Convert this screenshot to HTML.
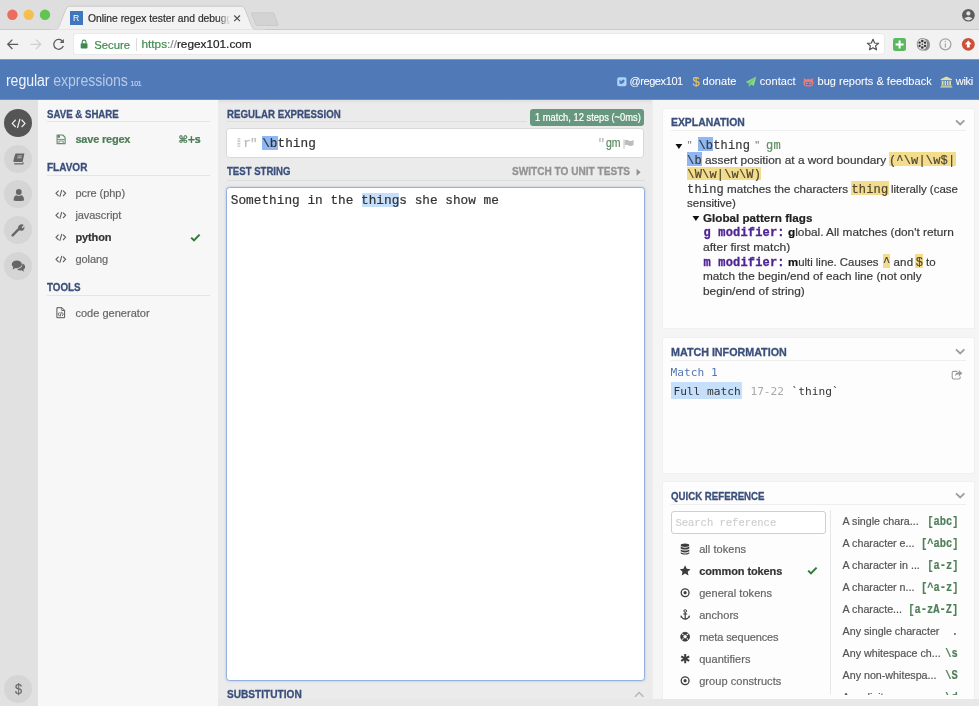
<!DOCTYPE html>
<html lang="en"><head><meta charset="utf-8"><title>Online regex tester and debugger</title>
<style>
html,body{margin:0;padding:0}
body{width:979px;height:706px;position:relative;overflow:hidden;background:#ebebeb;font-family:"Liberation Sans",sans-serif}
.b{position:absolute;box-sizing:border-box;display:block}
.t{position:absolute;white-space:pre;display:block}
.s{font-family:"Liberation Sans",sans-serif;-webkit-text-stroke:0.2px}
.m{font-family:"Liberation Mono",monospace;-webkit-text-stroke:0.2px}
.d{font-family:"DejaVu Sans Mono","Liberation Mono",monospace}
</style></head><body><div id="app" style="position:absolute;left:0;top:0;width:979px;height:706px;will-change:transform">
<div class="b" style="left:0px;top:0px;width:979px;height:29.5px;background:#dedede;"></div>
<div class="b" style="left:0px;top:29px;width:979px;height:1px;background:#c9c9c9;"></div>
<div class="b" style="left:0px;top:30px;width:979px;height:29px;background:#f2f2f2;"></div>
<svg class="b" style="left:50px;top:0px;" width="215" height="31" viewBox="0 0 215 31"><path d="M2.3 30 C7.8 30 8.3 28 9.8 24.5 L15.8 9.5 C16.8 7 17.8 6.3 20.3 6.3 L190.5 6.3 C193 6.3 194 7 195 9.5 L201 24.5 C202.5 28 203 30 208.5 30 Z" fill="#f2f2f2" stroke="#c4c4c4" stroke-width="0.8"/><rect x="0" y="29.7" width="215" height="2" fill="#f2f2f2"/></svg>
<svg class="b" style="left:248px;top:10px;" width="34" height="18" viewBox="0 0 34 18"><path d="M4.2 2.8 L24.6 2.8 Q25.6 2.8 26 3.8 L29.9 14.4 Q30.3 15.5 29.2 15.5 L9.3 15.5 Q8.3 15.5 7.9 14.5 L3.6 3.9 Q3.2 2.8 4.2 2.8 Z" fill="#d3d3d3" stroke="#c6c6c6" stroke-width="0.8"/></svg>
<svg class="b" style="left:5px;top:8px;" width="50" height="14" viewBox="0 0 50 14"><circle cx="7.4" cy="6.7" r="5.2" fill="#ed6b5f"/><circle cx="23.7" cy="6.7" r="5.2" fill="#f5bf4f"/><circle cx="40" cy="6.7" r="5.2" fill="#61c554"/></svg>
<div class="b" style="left:69.6px;top:11.4px;width:13.2px;height:13.2px;background:#3f77bf;"></div>
<span class="t s" style="left:73px;top:12.50px;font-size:8.6px;line-height:11px;color:#fff;-webkit-text-stroke:0;">R</span>
<div class="b" style="left:86px;top:8px;width:146px;height:20px;overflow:hidden">
<span class="t s" style="left:2px;top:4.00px;font-size:10.3px;line-height:13px;color:#2f2f2f;">Online regex tester and debugger: PHP, PCRE, Python, Golang and JavaScript</span>
</div>
<div class="b" style="left:218px;top:9px;width:14px;height:18px;background:linear-gradient(90deg,rgba(242,242,242,0),#f2f2f2 90%);"></div>
<svg class="b" style="left:233px;top:14px;" width="9" height="9" viewBox="0 0 9 9"><path d="M1.2 1.5 L7 7.2 M7 1.5 L1.2 7.2" stroke="#4a4a4a" stroke-width="1.1" fill="none"/></svg>
<svg class="b" style="left:961px;top:7.5px;" width="15" height="15" viewBox="0 0 15 15"><circle cx="7.4" cy="7.3" r="6.3" fill="#5c5c5c"/><circle cx="7.4" cy="5.4" r="2.1" fill="#dedede"/><path d="M3.2 10.6 Q7.4 6.8 11.6 10.6 Q9.8 12.4 7.4 12.4 Q5 12.4 3.2 10.6Z" fill="#dedede"/></svg>
<svg class="b" style="left:5px;top:37px;" width="16" height="15" viewBox="0 0 16 15"><path d="M13.2 7.3 L3 7.3 M7.4 2.6 L2.7 7.3 L7.4 12" stroke="#5a5a5a" stroke-width="1.25" fill="none"/></svg>
<svg class="b" style="left:28px;top:37px;" width="16" height="15" viewBox="0 0 16 15"><path d="M2.4 7.3 L12.4 7.3 M8 2.6 L12.7 7.3 L8 12" stroke="#cfcfcf" stroke-width="1.25" fill="none"/></svg>
<svg class="b" style="left:51px;top:37px;" width="16" height="15" viewBox="0 0 16 15"><path d="M11.6 4.4 A4.9 4.9 0 1 0 12.3 9" stroke="#5a5a5a" stroke-width="1.25" fill="none"/><path d="M12.9 1.9 L12.9 6.1 L8.7 6.1 Z" fill="#5a5a5a"/></svg>
<div class="b" style="left:73.4px;top:33px;width:811.2px;height:22px;background:#fff;border:1px solid #e9e9e9;border-radius:3.5px;"></div>
<svg class="b" style="left:80px;top:39px;" width="9" height="11" viewBox="0 0 9 11"><rect x="0.7" y="4.2" width="6.8" height="5.4" rx="0.8" fill="#3f8b4f"/><path d="M2.2 4.6 V3 A1.9 1.9 0 0 1 6 3 V4.6" stroke="#3f8b4f" stroke-width="1.1" fill="none"/></svg>
<span class="t s" style="left:94.2px;top:37.50px;font-size:11.3px;line-height:15px;color:#3f8b4f;">Secure</span>
<div class="b" style="left:135.6px;top:38px;width:1px;height:12.5px;background:#dcdcdc;"></div>
<span class="t s" style="left:141.5px;top:37.3px;font-size:11.8px;line-height:15px;color:#222"><span style="color:#3f8b4f">https</span><span style="color:#8a8a8a">://</span>regex101.com</span>
<svg class="b" style="left:866px;top:38px;" width="14" height="13" viewBox="0 0 14 13"><path d="M7 1.3 L8.6 5 L12.6 5.3 L9.6 7.9 L10.5 11.8 L7 9.7 L3.5 11.8 L4.4 7.9 L1.4 5.3 L5.4 5 Z" stroke="#505050" stroke-width="1.2" fill="none" stroke-linejoin="round"/></svg>
<div class="b" style="left:893.3px;top:37.6px;width:13.2px;height:13.2px;background:#5cb860;border-radius:2.2px;"></div>
<svg class="b" style="left:893.3px;top:37.6px;" width="13.2" height="13.2" viewBox="0 0 13.2 13.2"><path d="M6.6 2.6 V10.6 M2.6 6.6 H10.6" stroke="#fff" stroke-width="2"/></svg>
<svg class="b" style="left:915.5px;top:37px;" width="15" height="14.5" viewBox="0 0 15 14.5"><ellipse cx="9.4" cy="7.8" rx="4.6" ry="6" fill="#8f8f8f"/><ellipse cx="6.3" cy="7.2" rx="5.5" ry="6.3" fill="#7c7c7c"/><ellipse cx="6.3" cy="7.2" rx="4.8" ry="5.6" fill="#dcdcdc"/><circle cx="6.3" cy="3.9" r="1.25" fill="#333"/><circle cx="6.3" cy="10.5" r="1.25" fill="#333"/><circle cx="3.6" cy="5.7" r="1.15" fill="#333"/><circle cx="9" cy="5.7" r="1.15" fill="#333"/><circle cx="3.6" cy="8.9" r="1.15" fill="#333"/><circle cx="9" cy="8.9" r="1.15" fill="#333"/><circle cx="6.3" cy="7.2" r="0.8" fill="#333"/></svg>
<svg class="b" style="left:938px;top:37px;" width="15" height="15" viewBox="0 0 15 15"><circle cx="7.4" cy="7.3" r="5.5" stroke="#a2a2a2" stroke-width="1.25" fill="none"/><path d="M7.4 6.3 V10.4" stroke="#aaa" stroke-width="1.2"/><circle cx="7.4" cy="4.4" r="0.75" fill="#aaa"/></svg>
<svg class="b" style="left:961px;top:37px;" width="15" height="15" viewBox="0 0 15 15"><circle cx="7.3" cy="7.3" r="6.4" fill="#c9513b"/><path d="M7.3 3.4 L10.7 7.2 L8.7 7.2 L8.7 10.6 L5.9 10.6 L5.9 7.2 L3.9 7.2 Z" fill="#fff"/></svg>
<div class="b" style="left:0px;top:59px;width:979px;height:41px;background:#5079b8;"></div>
<div class="b" style="left:0px;top:59px;width:979px;height:1px;background:#8099c9;"></div>
<div class="b" style="left:0px;top:99px;width:979px;height:1px;background:#6f8fc3;"></div>
<span class="t s" style="left:6.2px;top:68.5px;font-size:17.3px;line-height:22px;color:#eef3fa;-webkit-text-stroke:0;transform:scaleX(0.8175);transform-origin:0 0;letter-spacing:-0.1px">regular <span style="color:#b7c9e6">expressions</span></span>
<span class="t s" style="left:130.6px;top:79.00px;font-size:6.8px;line-height:9px;color:#c3d3ec;letter-spacing:-0.2px;">101</span>
<svg class="b" style="left:616.5px;top:76.7px;" width="10" height="10" viewBox="0 0 10 10"><rect x="0.2" y="0.3" width="9.3" height="9" rx="1.8" fill="#a9d4f7"/><path d="M2.1 6.9 Q4.6 7.4 6.3 5.9 Q7.5 4.8 7.4 3.6 L8 2.9 L7.2 3 Q6.4 2.2 5.5 2.8 Q4.8 3.3 4.9 4.1 Q3.4 4 2.4 2.9 Q1.9 4 2.8 4.8 L2.2 4.7 Q2.4 5.7 3.3 6 Q2.8 6.6 2.1 6.9Z" fill="#4f78b7"/></svg>
<span class="t s" style="left:629.4px;top:74.00px;font-size:11px;line-height:14px;color:#fff;letter-spacing:-0.4px;-webkit-text-stroke:0.05px;">@regex101</span>
<span class="t s" style="left:692.6px;top:73.00px;font-size:13px;line-height:17px;color:#f3c65e;-webkit-text-stroke:0.1px;">$</span>
<span class="t s" style="left:702.5px;top:74.00px;font-size:11px;line-height:14px;color:#fff;letter-spacing:0.05px;-webkit-text-stroke:0.05px;">donate</span>
<svg class="b" style="left:744.6px;top:75.6px;" width="12" height="12" viewBox="0 0 12 12"><path d="M11.3 0.5 L0.6 5.9 L3.6 7.2 L4 10.9 L6 8.4 L8.8 9.9 Z" fill="#84d982"/><path d="M11.3 0.5 L3.6 7.2 L4 10.9 L4.9 7.7 Z" fill="#63bd67"/></svg>
<span class="t s" style="left:759.8px;top:74.00px;font-size:11px;line-height:14px;color:#fff;letter-spacing:0.05px;-webkit-text-stroke:0.05px;">contact</span>
<svg class="b" style="left:803px;top:76.5px;" width="11" height="11" viewBox="0 0 11 11"><path d="M0.9 1 L3 2.4 Q5.4 1.8 7.8 2.4 L9.9 1 L9.9 3.8 Q10.8 5.4 10.3 7.2 Q9.6 9.6 5.4 9.6 Q1.2 9.6 0.5 7.2 Q0 5.4 0.9 3.8 Z" fill="#f07a7a"/><rect x="1.9" y="5" width="7" height="3.2" rx="1.5" fill="#6a6f9f"/><circle cx="3.8" cy="6.6" r="0.75" fill="#f4a9a4"/><circle cx="7" cy="6.6" r="0.75" fill="#f4a9a4"/></svg>
<span class="t s" style="left:817.5px;top:74.00px;font-size:11px;line-height:14px;color:#fff;letter-spacing:0.02px;-webkit-text-stroke:0.05px;">bug reports &amp; feedback</span>
<svg class="b" style="left:939.5px;top:75.5px;" width="13" height="12" viewBox="0 0 13 12"><path d="M6.3 0.5 L12 3.3 L12 4.2 L0.6 4.2 L0.6 3.3 Z M1.7 4.9 H3.5 V9 H1.7Z M4.5 4.9 H6 V9 H4.5Z M6.9 4.9 H8.4 V9 H6.9Z M9.3 4.9 H11 V9 H9.3Z M1 9.5 H11.7 V10.4 H1Z M0.3 10.7 H12.4 V11.6 H0.3Z" fill="#dfe0a6"/></svg>
<span class="t s" style="left:955.8px;top:74.00px;font-size:11px;line-height:14px;color:#fff;letter-spacing:-0.3px;-webkit-text-stroke:0.05px;">wiki</span>
<div class="b" style="left:0px;top:100px;width:38px;height:606px;background:#e1e1e1;"></div>
<div class="b" style="left:4.2px;top:109.1px;width:28px;height:28px;background:#555;border-radius:50%;"></div>
<div class="b" style="left:4.2px;top:144.7px;width:28px;height:28px;background:#d5d5d5;border-radius:50%;"></div>
<div class="b" style="left:4.2px;top:180.3px;width:28px;height:28px;background:#d5d5d5;border-radius:50%;"></div>
<div class="b" style="left:4.2px;top:215.8px;width:28px;height:28px;background:#d5d5d5;border-radius:50%;"></div>
<div class="b" style="left:4.2px;top:251.5px;width:28px;height:28px;background:#d5d5d5;border-radius:50%;"></div>
<div class="b" style="left:4.2px;top:675.2px;width:28px;height:28px;background:#d5d5d5;border-radius:50%;"></div>
<svg class="b" style="left:10.6px;top:117.6px;" width="16" height="11" viewBox="0 0 16 11"><path d="M4.7 1.8 L1.3 5.4 L4.7 9 M10.6 1.8 L14 5.4 L10.6 9 M9 0.9 L6.4 10" stroke="#ececec" stroke-width="1.25" fill="none"/></svg>
<svg class="b" style="left:11.5px;top:152px;" width="14" height="14" viewBox="0 0 14 14"><path d="M4.2 1.5 L12.4 1.5 L10.6 10 L2.4 10 Q0.9 10 1.4 8.4 L3 2.8 Q3.4 1.5 4.2 1.5 Z" fill="#666"/><path d="M2.2 11.8 L10.8 11.8 L11.3 10.4" stroke="#666" stroke-width="1.2" fill="none"/><path d="M5.6 4 H10 M5.2 5.8 H9.6" stroke="#d5d5d5" stroke-width="0.8"/></svg>
<svg class="b" style="left:11.5px;top:187.5px;" width="14" height="14" viewBox="0 0 14 14"><circle cx="6.8" cy="4" r="2.9" fill="#666"/><path d="M1.6 12.4 Q1.6 7.6 4.4 7.3 Q6.8 8.9 9.2 7.3 Q12 7.6 12 12.4 Q6.8 13.6 1.6 12.4Z" fill="#666"/></svg>
<svg class="b" style="left:11.3px;top:222.6px;" width="14" height="14" viewBox="0 0 14 14"><path d="M1.6 12.4 L7.2 6.6" stroke="#666" stroke-width="2.3" stroke-linecap="round"/><path d="M8.2 2.2 Q10.6 0.4 12.8 2 L10.6 4.2 L11.6 5.4 L13.4 3.2 Q14 6 11.8 7.4 Q9.8 8.4 7.8 7 Q6 5 8.2 2.2Z" fill="#666"/></svg>
<svg class="b" style="left:11px;top:258.8px;" width="15" height="14" viewBox="0 0 15 14"><ellipse cx="5.8" cy="5.3" rx="5" ry="3.9" fill="#666"/><path d="M2.4 7.6 L1.6 10.6 L5.2 8.8Z" fill="#666"/><path d="M11.4 4.4 Q14.4 5.6 14.1 8.2 Q13.8 9.9 12.4 10.6 L13.2 12.8 L10.6 11.3 Q7.6 11.8 6 9.9 Q11.4 9.6 11.4 4.4Z" fill="#666"/></svg>
<span class="t s" style="left:14.6px;top:678.50px;font-size:15px;line-height:20px;color:#6a6a6a;-webkit-text-stroke:0.25px #6a6a6a;transform:scaleX(0.8511);transform-origin:0 50%;">$</span>
<div class="b" style="left:38px;top:100px;width:180.2px;height:606px;background:#f7f7f7;"></div>
<span class="t s" style="left:47.1px;top:107.00px;font-size:11.1px;line-height:14px;color:#3a4f7b;font-weight:bold;-webkit-text-stroke:0.3px #3a4f7b;transform:scaleX(0.8709);transform-origin:0 50%;">SAVE &amp; SHARE</span>
<div class="b" style="left:46.5px;top:121px;width:163px;height:1px;background:#e4e4e4;"></div>
<svg class="b" style="left:55.6px;top:133.8px;" width="11" height="11" viewBox="0 0 11 11"><g opacity="0.9"><path d="M1.1 1 H6.8 L9.1 3.3 V9.7 H1.1 Z" stroke="#4d7d56" stroke-width="1.1" fill="none" stroke-linejoin="round"/><rect x="1.6" y="1.2" width="2.4" height="2.5" fill="#4d7d56"/><path d="M1.4 5.4 H8.8" stroke="#4d7d56" stroke-width="0.9"/><rect x="3" y="7" width="4.2" height="2.4" fill="none" stroke="#4d7d56" stroke-width="0.8"/></g></svg>
<span class="t s" style="left:75.4px;top:132.00px;font-size:11px;line-height:14px;color:#4d7d56;font-weight:bold;letter-spacing:-0.2px;">save regex</span>
<span class="t s" style="left:178.6px;top:133.00px;font-size:10px;line-height:13px;color:#4d7d56;font-weight:bold;font-family:'DejaVu Sans','Liberation Sans',sans-serif;letter-spacing:-0.7px;">⌘+s</span>
<span class="t s" style="left:47.1px;top:160.00px;font-size:11.1px;line-height:14px;color:#3a4f7b;font-weight:bold;-webkit-text-stroke:0.3px #3a4f7b;transform:scaleX(0.9016);transform-origin:0 50%;">FLAVOR</span>
<div class="b" style="left:46.5px;top:175px;width:163px;height:1px;background:#e4e4e4;"></div>
<svg class="b" style="left:55.2px;top:188.9px;" width="12" height="9" viewBox="0 0 12 9"><path d="M3.6 1.6 L1 4.3 L3.6 7 M8 1.6 L10.6 4.3 L8 7 M6.8 0.8 L4.8 7.8" stroke="#606060" stroke-width="1.1" fill="none"/></svg>
<span class="t s" style="left:75.4px;top:186.00px;font-size:11px;line-height:14px;color:#666;letter-spacing:-0.05px;">pcre (php)</span>
<svg class="b" style="left:55.2px;top:210.9px;" width="12" height="9" viewBox="0 0 12 9"><path d="M3.6 1.6 L1 4.3 L3.6 7 M8 1.6 L10.6 4.3 L8 7 M6.8 0.8 L4.8 7.8" stroke="#606060" stroke-width="1.1" fill="none"/></svg>
<span class="t s" style="left:75.4px;top:208.00px;font-size:11px;line-height:14px;color:#666;letter-spacing:-0.05px;">javascript</span>
<svg class="b" style="left:55.2px;top:232.9px;" width="12" height="9" viewBox="0 0 12 9"><path d="M3.6 1.6 L1 4.3 L3.6 7 M8 1.6 L10.6 4.3 L8 7 M6.8 0.8 L4.8 7.8" stroke="#606060" stroke-width="1.1" fill="none"/></svg>
<span class="t s" style="left:75.4px;top:230.00px;font-size:11px;line-height:14px;color:#333;font-weight:bold;letter-spacing:-0.1px;">python</span>
<svg class="b" style="left:189.5px;top:232.8px;" width="11" height="9" viewBox="0 0 11 9"><path d="M1.2 4.6 L4 7.4 L9.6 1.6" stroke="#2f7a36" stroke-width="2" fill="none"/></svg>
<svg class="b" style="left:55.2px;top:254.9px;" width="12" height="9" viewBox="0 0 12 9"><path d="M3.6 1.6 L1 4.3 L3.6 7 M8 1.6 L10.6 4.3 L8 7 M6.8 0.8 L4.8 7.8" stroke="#606060" stroke-width="1.1" fill="none"/></svg>
<span class="t s" style="left:75.4px;top:252.00px;font-size:11px;line-height:14px;color:#666;letter-spacing:-0.05px;">golang</span>
<span class="t s" style="left:47.1px;top:280.00px;font-size:11.1px;line-height:14px;color:#3a4f7b;font-weight:bold;-webkit-text-stroke:0.3px #3a4f7b;transform:scaleX(0.8835);transform-origin:0 50%;">TOOLS</span>
<div class="b" style="left:46.5px;top:294.6px;width:163px;height:1px;background:#e4e4e4;"></div>
<svg class="b" style="left:56px;top:306.5px;" width="10" height="12" viewBox="0 0 10 12"><path d="M0.9 0.7 H6 L8.6 3.3 V10.7 H0.9 Z" stroke="#555" stroke-width="1" fill="none"/><path d="M5.8 0.8 V3.5 H8.5" stroke="#555" stroke-width="0.9" fill="none"/><path d="M3.4 5.4 L2.2 7.2 L3.4 9 M6.1 5.4 L7.3 7.2 L6.1 9 M5.3 4.9 L4.2 9.5" stroke="#555" stroke-width="0.9" fill="none"/></svg>
<span class="t s" style="left:75.4px;top:306.00px;font-size:11px;line-height:14px;color:#666;letter-spacing:0.02px;">code generator</span>
<div class="b" style="left:218.2px;top:100px;width:434.4px;height:599px;background:#ebebeb;background:linear-gradient(#dedede,#ebebeb 4px,#ebebeb);"></div>
<div class="b" style="left:218.2px;top:699px;width:760.8px;height:7px;background:#e8e8e8;"></div>
<span class="t s" style="left:227px;top:107.00px;font-size:11.1px;line-height:14px;color:#3a4f7b;font-weight:bold;-webkit-text-stroke:0.3px #3a4f7b;transform:scaleX(0.8744);transform-origin:0 50%;">REGULAR EXPRESSION</span>
<div class="b" style="left:226.5px;top:121px;width:300px;height:1px;background:#dedede;"></div>
<div class="b" style="left:530.2px;top:108.6px;width:114.2px;height:17.2px;background:#68977f;border-radius:3px;"></div>
<span class="t s" style="left:535px;top:111.00px;font-size:10px;line-height:13px;color:#fff;transform:scaleX(0.9354);transform-origin:0 50%;">1 match, 12 steps (~0ms)</span>
<div class="b" style="left:226px;top:128px;width:418.4px;height:30px;background:#fff;border:1px solid #d8d8d8;border-radius:3.5px;"></div>
<svg class="b" style="left:236.5px;top:138px;" width="4" height="10" viewBox="0 0 4 10"><path d="M0.5 0.9 H3.3 M0.5 3.3 H3.3 M0.5 5.7 H3.3 M0.5 8.1 H3.3" stroke="#c4c4c4" stroke-width="1.4"/></svg>
<span class="t m" style="left:243.2px;top:135.00px;font-size:12.77px;line-height:17px;color:#b9b9b9;letter-spacing:-0.8px;">r&quot;</span>
<div class="b" style="left:262.2px;top:136.2px;width:15.5px;height:14.2px;background:#8fb7f3;"></div>
<span class="t m" style="left:262.2px;top:135.00px;font-size:12.77px;line-height:17px;color:#333;">\bthing</span>
<span class="t m" style="left:597.5px;top:135.00px;font-size:12.77px;line-height:17px;color:#b9b9b9;">&quot;</span>
<span class="t s" style="left:605.8px;top:135.00px;font-size:12px;line-height:16px;color:#5a8a5e;transform:scaleX(0.8758);transform-origin:0 50%;">gm</span>
<svg class="b" style="left:623px;top:139px;" width="12" height="10" viewBox="0 0 12 10"><path d="M1 0.4 V9.8" stroke="#c2c2c2" stroke-width="1"/><path d="M1.8 1.4 Q3.6 0.2 5.6 1.4 Q7.8 2.6 10.6 1 V6 Q7.8 7.6 5.6 6.4 Q3.6 5.2 1.8 6.4Z" fill="#bdbdbd"/></svg>
<span class="t s" style="left:227px;top:164.00px;font-size:11.1px;line-height:14px;color:#3a4f7b;font-weight:bold;-webkit-text-stroke:0.3px #3a4f7b;transform:scaleX(0.8639);transform-origin:0 50%;">TEST STRING</span>
<div class="b" style="left:226.5px;top:180px;width:418px;height:1px;background:#dcdcdc;"></div>
<span class="t s" style="left:512px;top:164.00px;font-size:10.9px;line-height:14px;color:#939393;font-weight:bold;-webkit-text-stroke:0.3px #939393;transform:scaleX(0.9265);transform-origin:0 50%;">SWITCH TO UNIT TESTS</span>
<svg class="b" style="left:635.5px;top:167.5px;" width="6" height="9" viewBox="0 0 6 9"><path d="M0.6 0.8 L4.6 4.3 L0.6 7.8Z" fill="#8f8f8f"/></svg>
<div class="b" style="left:226px;top:186.6px;width:418.5px;height:494px;background:#fff;border:1px solid #94afdb;border-radius:3.5px;box-shadow:0 0 2.5px rgba(100,140,205,.45);"></div>
<div class="b" style="left:361.6px;top:192.6px;width:37.6px;height:14.8px;background:#c6dffb;"></div>
<span class="t m" style="left:230.8px;top:192.00px;font-size:12.77px;line-height:17px;color:#333;">Something in the things she show me</span>
<span class="t s" style="left:227px;top:687.00px;font-size:11.1px;line-height:14px;color:#3a4f7b;font-weight:bold;-webkit-text-stroke:0.3px #3a4f7b;transform:scaleX(0.9120);transform-origin:0 50%;">SUBSTITUTION</span>
<svg class="b" style="left:634px;top:690.5px;" width="10.5" height="7" viewBox="0 0 10.5 7"><path d="M1 5.8 L5.2 1.6 L9.4 5.8" stroke="#b5b5b5" stroke-width="1.4" fill="none"/></svg>
<div class="b" style="left:652.6px;top:100px;width:326.4px;height:599px;background:#f5f5f5;"></div>
<div class="b" style="left:652px;top:100px;width:1px;height:599px;background:#efefef;"></div>
<div class="b" style="left:662px;top:108px;width:313px;height:221px;background:#fdfdfd;border:1px solid #f0f0f0;border-radius:2px;"></div>
<span class="t s" style="left:670.6px;top:115.00px;font-size:11.1px;line-height:14px;color:#3a4f7b;font-weight:bold;-webkit-text-stroke:0.3px #3a4f7b;transform:scaleX(0.9374);transform-origin:0 50%;">EXPLANATION</span>
<div class="b" style="left:670.8px;top:130.2px;width:295.5px;height:1px;background:#eeeeee;"></div>
<svg class="b" style="left:954.9px;top:119px;" width="10.5" height="7" viewBox="0 0 10.5 7"><path d="M1 1.3 L5.2 5.5 L9.4 1.3" stroke="#9c9c9c" stroke-width="1.8" fill="none"/></svg>
<svg class="b" style="left:675px;top:142.6px;" width="8" height="7" viewBox="0 0 8 7"><path d="M0.5 1 H7.3 L3.9 6Z" fill="#111"/></svg>
<span class="t s" style="left:687.6px;top:137.50px;font-size:11.5px;line-height:15px;color:#888;">&quot;</span>
<div class="b" style="left:698.3px;top:137.2px;width:14.7px;height:13.4px;background:#8fb7f3;"></div>
<span class="t m" style="left:698.39px;top:138.00px;font-size:12px;line-height:16px;color:#3a3a3a;letter-spacing:0.18px;">\bthing</span>
<span class="t s" style="left:755.2px;top:137.50px;font-size:11.5px;line-height:15px;color:#888;">&quot;</span>
<span class="t m" style="left:766.09px;top:138.00px;font-size:12px;line-height:16px;color:#5f8f63;letter-spacing:0.18px;">gm</span>
<div class="b" style="left:687px;top:152.2px;width:14.7px;height:13.4px;background:#8fb7f3;"></div>
<span class="t m" style="left:687.09px;top:153.00px;font-size:12px;line-height:16px;color:#3a3a3a;letter-spacing:0.18px;">\b</span>
<span class="t s" style="left:704.6px;top:152.50px;font-size:11.5px;line-height:15px;color:#3a3a3a;transform:scaleX(1.0307);transform-origin:0 50%;">assert position at a word boundary</span>
<div class="b" style="left:888.6px;top:152.4px;width:67px;height:13.4px;background:#f4dc8d;"></div>
<span class="t m" style="left:888.89px;top:153.00px;font-size:12px;line-height:16px;color:#4d4632;letter-spacing:0.18px;">(^\w|\w$|</span>
<div class="b" style="left:687px;top:166.9px;width:74.2px;height:13.4px;background:#f4dc8d;"></div>
<span class="t m" style="left:687.2900000000001px;top:167.00px;font-size:12px;line-height:16px;color:#4d4632;letter-spacing:0.18px;">\W\w|\w\W)</span>
<span class="t m" style="left:687.09px;top:182.00px;font-size:12px;line-height:16px;color:#3a3a3a;letter-spacing:0.18px;">thing</span>
<span class="t s" style="left:727.2px;top:181.50px;font-size:11.5px;line-height:15px;color:#3a3a3a;transform:scaleX(1.0123);transform-origin:0 50%;">matches the characters</span>
<div class="b" style="left:851px;top:181.4px;width:37.7px;height:13.4px;background:#f4dc8d;"></div>
<span class="t m" style="left:851.39px;top:182.00px;font-size:12px;line-height:16px;color:#4d4632;letter-spacing:0.18px;">thing</span>
<span class="t s" style="left:891.4px;top:181.50px;font-size:11.5px;line-height:15px;color:#3a3a3a;transform:scaleX(0.9970);transform-origin:0 50%;">literally (case</span>
<span class="t s" style="left:686.8px;top:195.50px;font-size:11.5px;line-height:15px;color:#3a3a3a;transform:scaleX(1.0047);transform-origin:0 50%;">sensitive)</span>
<svg class="b" style="left:691.5px;top:215.2px;" width="8" height="7" viewBox="0 0 8 7"><path d="M0.5 1 H7.3 L3.9 6Z" fill="#111"/></svg>
<span class="t s" style="left:703.4px;top:210.50px;font-size:11.5px;line-height:15px;color:#222;font-weight:bold;transform:scaleX(1.0131);transform-origin:0 50%;">Global pattern flags</span>
<span class="t m" style="left:703.49px;top:225.00px;font-size:12px;line-height:16px;color:#4f2494;font-weight:bold;letter-spacing:0.18px;-webkit-text-stroke:0.3px #4f2494;">g modifier:</span>
<span class="t s" style="left:788px;top:224.50px;font-size:11.5px;line-height:15px;color:#3a3a3a;transform:scaleX(1.0278);transform-origin:0 50%;"><b style="color:#111">g</b>lobal. All matches (don&#39;t return</span>
<span class="t s" style="left:703.4px;top:239.50px;font-size:11.5px;line-height:15px;color:#3a3a3a;transform:scaleX(1.0497);transform-origin:0 50%;">after first match)</span>
<span class="t m" style="left:703.49px;top:255.00px;font-size:12px;line-height:16px;color:#4f2494;font-weight:bold;letter-spacing:0.18px;-webkit-text-stroke:0.3px #4f2494;">m modifier:</span>
<span class="t s" style="left:788px;top:254.50px;font-size:11.5px;line-height:15px;color:#3a3a3a;transform:scaleX(0.9894);transform-origin:0 50%;"><b style="color:#111">m</b>ulti line. Causes</span>
<div class="b" style="left:882.8px;top:254.2px;width:7.6px;height:13.4px;background:#f4dc8d;"></div>
<span class="t m" style="left:883.09px;top:255.00px;font-size:12px;line-height:16px;color:#4d4632;letter-spacing:0.18px;">^</span>
<span class="t s" style="left:893.6px;top:254.50px;font-size:11.5px;line-height:15px;color:#3a3a3a;letter-spacing:0.12px;">and</span>
<div class="b" style="left:915.4px;top:254.2px;width:7.6px;height:13.4px;background:#f4dc8d;"></div>
<span class="t m" style="left:915.69px;top:255.00px;font-size:12px;line-height:16px;color:#4d4632;letter-spacing:0.18px;">$</span>
<span class="t s" style="left:926px;top:254.50px;font-size:11.5px;line-height:15px;color:#3a3a3a;letter-spacing:0.12px;">to</span>
<span class="t s" style="left:703.4px;top:268.50px;font-size:11.5px;line-height:15px;color:#3a3a3a;transform:scaleX(1.0237);transform-origin:0 50%;">match the begin/end of each line (not only</span>
<span class="t s" style="left:703.4px;top:283.50px;font-size:11.5px;line-height:15px;color:#3a3a3a;transform:scaleX(1.0340);transform-origin:0 50%;">begin/end of string)</span>
<div class="b" style="left:662px;top:337.4px;width:313px;height:136.4px;background:#fdfdfd;border:1px solid #f0f0f0;border-radius:2px;"></div>
<span class="t s" style="left:670.6px;top:345.00px;font-size:11.1px;line-height:14px;color:#3a4f7b;font-weight:bold;-webkit-text-stroke:0.3px #3a4f7b;transform:scaleX(0.9664);transform-origin:0 50%;">MATCH INFORMATION</span>
<div class="b" style="left:670.8px;top:360px;width:295.5px;height:1px;background:#eeeeee;"></div>
<svg class="b" style="left:954.9px;top:348px;" width="10.5" height="7" viewBox="0 0 10.5 7"><path d="M1 1.3 L5.2 5.5 L9.4 1.3" stroke="#9c9c9c" stroke-width="1.8" fill="none"/></svg>
<span class="t d" style="left:670.6px;top:365.00px;font-size:11.2px;line-height:15px;color:#5577b4;">Match 1</span>
<div class="b" style="left:670.7px;top:381.8px;width:71.5px;height:17px;background:#c6dffb;"></div>
<span class="t d" style="left:673.4px;top:384.00px;font-size:11.2px;line-height:15px;color:#333;">Full match</span>
<span class="t d" style="left:750.4px;top:384.00px;font-size:11.2px;line-height:15px;color:#a9a9a9;">17-22</span>
<span class="t d" style="left:791.5px;top:384.00px;font-size:11.2px;line-height:15px;color:#333;">`thing`</span>
<svg class="b" style="left:951px;top:369.2px;" width="12" height="11" viewBox="0 0 12 11"><path d="M6.4 2.4 H2.6 Q1.2 2.4 1.2 3.8 V8.6 Q1.2 10 2.6 10 H7.8 Q9.2 10 9.2 8.6 V7.4" stroke="#9a9a9a" stroke-width="1.1" fill="none"/><path d="M4 7 Q4 3.4 7.8 3.2 V1 L11.4 4.2 L7.8 7.4 V5.2 Q5.2 5.2 4 7Z" fill="#9a9a9a"/></svg>
<div class="b" style="left:662px;top:481.4px;width:313px;height:217.6px;background:#fdfdfd;border:1px solid #f0f0f0;border-radius:2px;border-bottom:none;border-radius:2px 2px 0 0;"></div>
<span class="t s" style="left:670.6px;top:489.00px;font-size:11.1px;line-height:14px;color:#3a4f7b;font-weight:bold;-webkit-text-stroke:0.3px #3a4f7b;transform:scaleX(0.8722);transform-origin:0 50%;">QUICK REFERENCE</span>
<div class="b" style="left:670.8px;top:504px;width:295.5px;height:1px;background:#eeeeee;"></div>
<svg class="b" style="left:954.9px;top:491.9px;" width="10.5" height="7" viewBox="0 0 10.5 7"><path d="M1 1.3 L5.2 5.5 L9.4 1.3" stroke="#9c9c9c" stroke-width="1.8" fill="none"/></svg>
<div class="b" style="left:670.7px;top:510.6px;width:155px;height:23px;background:#fff;border:1px solid #cfcfcf;border-radius:3px;"></div>
<span class="t m" style="left:675.4px;top:516.00px;font-size:10.5px;line-height:14px;color:#cfcfcf;">Search reference</span>
<div class="b" style="left:830px;top:510px;width:1px;height:184px;background:#e6e6e6;"></div>
<svg class="b" style="left:679.8px;top:543.1px;" width="11" height="13" viewBox="0 0 11 13"><ellipse cx="5" cy="2.3" rx="4.3" ry="1.7" fill="#3d3d3d"/><path d="M0.7 3.6 Q5 6 9.3 3.6 V5.4 Q5 7.8 0.7 5.4Z M0.7 6.4 Q5 8.8 9.3 6.4 V8.2 Q5 10.6 0.7 8.2Z M0.7 9.2 Q5 11.6 9.3 9.2 V10.4 Q5 12.8 0.7 10.4Z" fill="#3d3d3d"/></svg>
<span class="t s" style="left:699.2px;top:542.00px;font-size:11px;line-height:14px;color:#666;letter-spacing:0.05px;">all tokens</span>
<svg class="b" style="left:679.8px;top:565.1999999999999px;" width="11" height="13" viewBox="0 0 11 13"><path d="M5.1 0.3 L6.75 3.8 L10.5 4.2 L7.7 6.75 L8.5 10.5 L5.1 8.55 L1.7 10.5 L2.5 6.75 L-0.3 4.2 L3.45 3.8Z" fill="#3d3d3d"/></svg>
<span class="t s" style="left:699.2px;top:564.00px;font-size:11px;line-height:14px;color:#333;font-weight:bold;letter-spacing:-0.1px;">common tokens</span>
<svg class="b" style="left:806.6px;top:566.4px;" width="11" height="9" viewBox="0 0 11 9"><path d="M1.2 4.6 L4 7.4 L9.6 1.6" stroke="#2f7a36" stroke-width="2" fill="none"/></svg>
<svg class="b" style="left:679.8px;top:587.1999999999999px;" width="11" height="13" viewBox="0 0 11 13"><circle cx="5.1" cy="5.7" r="3.9" stroke="#3d3d3d" stroke-width="1.3" fill="none"/><circle cx="5.1" cy="5.7" r="1.6" fill="#3d3d3d"/></svg>
<span class="t s" style="left:699.2px;top:586.00px;font-size:11px;line-height:14px;color:#666;letter-spacing:0.05px;">general tokens</span>
<svg class="b" style="left:679.8px;top:609.1999999999999px;" width="11" height="13" viewBox="0 0 11 13"><circle cx="5.2" cy="2" r="1.3" stroke="#3d3d3d" stroke-width="1" fill="none"/><path d="M5.2 3.3 V10.3 M3.2 5 H7.2" stroke="#3d3d3d" stroke-width="1.2" fill="none"/><path d="M0.6 6.6 L2.4 7 L1.8 7.8 Q3.2 9.6 5.2 9.6 Q7.2 9.6 8.6 7.8 L8 7 L9.8 6.6 L9.8 8.8 L9.2 8.4 Q7.6 10.8 5.2 10.8 Q2.8 10.8 1.2 8.4 L0.6 8.8Z" fill="#3d3d3d"/></svg>
<span class="t s" style="left:699.2px;top:608.00px;font-size:11px;line-height:14px;color:#666;letter-spacing:0.05px;">anchors</span>
<svg class="b" style="left:679.8px;top:631.1999999999999px;" width="11" height="13" viewBox="0 0 11 13"><circle cx="5.1" cy="5.7" r="3.3" stroke="#3d3d3d" stroke-width="2.4" fill="none"/><path d="M1.4 2 L3.5 4.1 M8.8 2 L6.7 4.1 M1.4 9.4 L3.5 7.3 M8.8 9.4 L6.7 7.3" stroke="#fdfdfd" stroke-width="1.1"/><circle cx="5.1" cy="5.7" r="4.4" stroke="#3d3d3d" stroke-width="0.8" fill="none"/><circle cx="5.1" cy="5.7" r="2.1" stroke="#3d3d3d" stroke-width="0.7" fill="none"/></svg>
<span class="t s" style="left:699.2px;top:630.00px;font-size:11px;line-height:14px;color:#666;letter-spacing:-0.1px;">meta sequences</span>
<svg class="b" style="left:679.8px;top:653.1999999999999px;" width="11" height="13" viewBox="0 0 11 13"><path d="M5.2 1 V10.2 M1.2 3.3 L9.2 7.9 M9.2 3.3 L1.2 7.9" stroke="#3d3d3d" stroke-width="2" fill="none"/></svg>
<span class="t s" style="left:699.2px;top:652.00px;font-size:11px;line-height:14px;color:#666;letter-spacing:0.05px;">quantifiers</span>
<svg class="b" style="left:679.8px;top:675.1999999999999px;" width="11" height="13" viewBox="0 0 11 13"><circle cx="5.1" cy="5.7" r="3.9" stroke="#3d3d3d" stroke-width="1.3" fill="none"/><circle cx="5.1" cy="5.7" r="1.6" fill="#3d3d3d"/></svg>
<span class="t s" style="left:699.2px;top:674.00px;font-size:11px;line-height:14px;color:#666;letter-spacing:0.05px;">group constructs</span>
<div class="b" style="left:831px;top:505px;width:142px;height:189.5px;overflow:hidden">
<span class="t s" style="left:11.600000000000023px;top:9.00px;font-size:10.7px;line-height:14px;color:#555;">A single chara...</span>
<span class="t m" style="right:14.799999999999955px;top:8.00px;font-size:13.2px;line-height:17px;color:#4f7f58;font-weight:bold;transform:scaleX(0.7890);transform-origin:100% 50%;">[abc]</span>
<span class="t s" style="left:11.600000000000023px;top:31.00px;font-size:10.7px;line-height:14px;color:#555;">A character e...</span>
<span class="t m" style="right:14.799999999999955px;top:30.00px;font-size:13.2px;line-height:17px;color:#4f7f58;font-weight:bold;transform:scaleX(0.7890);transform-origin:100% 50%;">[^abc]</span>
<span class="t s" style="left:11.600000000000023px;top:53.00px;font-size:10.7px;line-height:14px;color:#555;">A character in ...</span>
<span class="t m" style="right:14.799999999999955px;top:52.00px;font-size:13.2px;line-height:17px;color:#4f7f58;font-weight:bold;transform:scaleX(0.7890);transform-origin:100% 50%;">[a-z]</span>
<span class="t s" style="left:11.600000000000023px;top:75.00px;font-size:10.7px;line-height:14px;color:#555;">A character n...</span>
<span class="t m" style="right:14.799999999999955px;top:74.00px;font-size:13.2px;line-height:17px;color:#4f7f58;font-weight:bold;transform:scaleX(0.7890);transform-origin:100% 50%;">[^a-z]</span>
<span class="t s" style="left:11.600000000000023px;top:97.00px;font-size:10.7px;line-height:14px;color:#555;">A characte...</span>
<span class="t m" style="right:14.799999999999955px;top:96.00px;font-size:13.2px;line-height:17px;color:#4f7f58;font-weight:bold;transform:scaleX(0.7890);transform-origin:100% 50%;">[a-zA-Z]</span>
<span class="t s" style="left:11.600000000000023px;top:119.00px;font-size:10.7px;line-height:14px;color:#555;">Any single character</span>
<span class="t m" style="right:14.799999999999955px;top:118.00px;font-size:13.2px;line-height:17px;color:#4f7f58;font-weight:bold;transform:scaleX(0.7890);transform-origin:100% 50%;">.</span>
<span class="t s" style="left:11.600000000000023px;top:141.00px;font-size:10.7px;line-height:14px;color:#555;">Any whitespace ch...</span>
<span class="t m" style="right:14.799999999999955px;top:140.00px;font-size:13.2px;line-height:17px;color:#4f7f58;font-weight:bold;transform:scaleX(0.7890);transform-origin:100% 50%;">\s</span>
<span class="t s" style="left:11.600000000000023px;top:163.00px;font-size:10.7px;line-height:14px;color:#555;">Any non-whitespa...</span>
<span class="t m" style="right:14.799999999999955px;top:162.00px;font-size:13.2px;line-height:17px;color:#4f7f58;font-weight:bold;transform:scaleX(0.7890);transform-origin:100% 50%;">\S</span>
<span class="t s" style="left:11.600000000000023px;top:185.00px;font-size:10.7px;line-height:14px;color:#555;">Any digit</span>
<span class="t m" style="right:14.799999999999955px;top:184.00px;font-size:13.2px;line-height:17px;color:#4f7f58;font-weight:bold;transform:scaleX(0.7890);transform-origin:100% 50%;">\d</span>
</div>
</div></body></html>
